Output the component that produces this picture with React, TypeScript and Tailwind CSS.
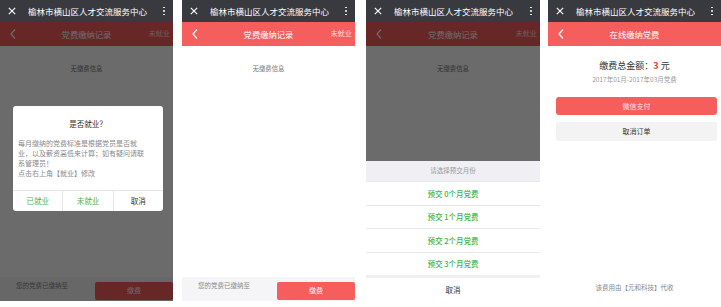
import React from "react";

const RED = "bg-[#f65d5d]";

function WxBar() {
  return (
    <div className="h-[22px] bg-[#393a3f] flex items-center text-white shrink-0">
      <svg className="ml-[8px] w-[8px] h-[8px]" viewBox="0 0 10 10">
        <path d="M1 1L9 9M9 1L1 9" stroke="white" strokeWidth="1.4" fill="none" />
      </svg>
      <span className="ml-[12px] text-[8.5px] leading-none whitespace-nowrap">
        榆林市横山区人才交流服务中心
      </span>
      <div className="ml-auto mr-[8px] flex flex-col gap-[2px]">
        <span className="w-[1.6px] h-[1.6px] bg-white rounded-full" />
        <span className="w-[1.6px] h-[1.6px] bg-white rounded-full" />
        <span className="w-[1.6px] h-[1.6px] bg-white rounded-full" />
      </div>
    </div>
  );
}

function Chevron() {
  return (
    <svg className="w-[6px] h-[10px]" viewBox="0 0 6 10">
      <polyline points="5,0.5 1,5 5,9.5" stroke="white" strokeWidth="1.2" fill="none" />
    </svg>
  );
}

function RedBar({ title, right }: { title: string; right?: string }) {
  return (
    <div className={`h-[24px] ${RED} flex items-center relative shrink-0`}>
      <div className="ml-[10px]">
        <Chevron />
      </div>
      <span className="absolute left-0 right-0 text-center text-white text-[8.3px] leading-none pointer-events-none">
        {title}
      </span>
      {right && (
        <span className="ml-auto mr-[3px] text-[7.2px] text-[#ffd9d9] leading-none">{right}</span>
      )}
    </div>
  );
}

function RecordPage() {
  return (
    <div className="flex-1 flex flex-col">
      <RedBar title="党费缴纳记录" right="未就业" />
      <div className="flex-1">
        <p className="mt-[19px] text-center text-[6.4px] text-[#777] leading-[8px]">无缴费信息</p>
      </div>
      <div className="h-[24px] bg-[#f5f5f7] flex items-center shrink-0">
        <span className="ml-[16px] -mt-[6px] text-[6.5px] text-[#888]">您的党费已缴纳至</span>
        <div className={`ml-auto mt-[3px] h-[18px] w-[78px] ${RED} rounded-[2px] flex items-center justify-center text-white text-[7px]`}>
          缴费
        </div>
      </div>
    </div>
  );
}

function Panel1() {
  return (
    <div className="w-[173px] h-[301px] flex flex-col relative">
      <WxBar />
      <div className="flex-1 flex flex-col relative">
        <RecordPage />
        <div className="absolute inset-0 bg-black/[0.58]" />
        <div className="absolute left-[13px] top-[84px] w-[150px] h-[105px] bg-white rounded-[3px] flex flex-col">
          <p className="mt-[13px] text-center text-[7.5px] text-[#333] leading-[10px]">是否就业？</p>
          <p className="mt-[9px] ml-[5px] text-[7px] leading-[10px] text-[#888] whitespace-nowrap">
            每月缴纳的党费标准是根据党员是否就
            <br />
            业，以及薪资高低来计算；如有疑问请联
            <br />
            系管理员！
            <br />
            点击右上角【就业】修改
          </p>
          <div className="mt-auto h-[21px] border-t border-[#e6e6e6] flex text-[7.5px]">
            <div className="flex-1 flex items-center justify-center text-[#4cb84c]">已就业</div>
            <div className="flex-1 flex items-center justify-center text-[#4cb84c] border-l border-[#e6e6e6]">未就业</div>
            <div className="flex-1 flex items-center justify-center text-[#333] border-l border-[#e6e6e6]">取消</div>
          </div>
        </div>
      </div>
    </div>
  );
}

function Panel2() {
  return (
    <div className="w-[173px] h-[301px] flex flex-col ml-[9px]">
      <WxBar />
      <RecordPage />
    </div>
  );
}

function Panel3() {
  const months = ["0", "1", "2", "3"];
  return (
    <div className="w-[174px] h-[301px] flex flex-col ml-[11px]">
      <WxBar />
      <div className="flex-1 flex flex-col relative">
        <RecordPage />
        <div className="absolute inset-0 flex flex-col">
          <div className="flex-1 bg-black/[0.58]" />
          <div className="bg-[#efeff4] flex flex-col">
            <div className="h-[20px] flex items-center justify-center text-[6.5px] text-[#999]">请选择预交月份</div>
            {months.map((m) => (
              <div
                key={m}
                className="h-[23.5px] bg-white border-t border-[#e8e8e8] flex items-center justify-center text-[7.5px] font-medium text-[#3cb43c]"
              >
                预交 {m}个月党费
              </div>
            ))}
            <div className="h-[23px] mt-[3px] bg-white flex items-center justify-center text-[7.5px] text-[#333]">
              取消
            </div>
          </div>
        </div>
      </div>
    </div>
  );
}

function Panel4() {
  return (
    <div className="w-[173px] h-[301px] flex flex-col ml-[8px]">
      <WxBar />
      <RedBar title="在线缴纳党费" />
      <div className="flex-1 flex flex-col">
        <p className="mt-[14px] text-center text-[9px] leading-[12px] text-[#333]">
          缴费总金额：<span className="text-[#e53935] font-semibold">3</span> 元
        </p>
        <p className="mt-[3px] text-center text-[6.5px] leading-[8px] text-[#999]">2017年01月-2017年03月党费</p>
        <div className={`mt-[14px] ml-[8px] mr-[4px] h-[18px] ${RED} rounded-[3px] flex items-center justify-center text-[7px] text-[#ffe3e3]`}>
          微信支付
        </div>
        <div className="mt-[7px] ml-[8px] mr-[4px] h-[19px] bg-[#f3f3f3] rounded-[2px] flex items-center justify-center text-[7px] text-[#333]">
          取消订单
        </div>
        <p className="mt-auto mb-[8px] text-center text-[6.5px] text-[#888]">该费用由【元和科技】代收</p>
      </div>
    </div>
  );
}

export default function App() {
  return (
    <div
      className="w-[721px] h-[307px] bg-white flex items-start overflow-hidden"
      style={{ fontFamily: '"Noto Sans CJK SC", "Noto Sans", sans-serif' }}
    >
      <Panel1 />
      <Panel2 />
      <Panel3 />
      <Panel4 />
    </div>
  );
}
